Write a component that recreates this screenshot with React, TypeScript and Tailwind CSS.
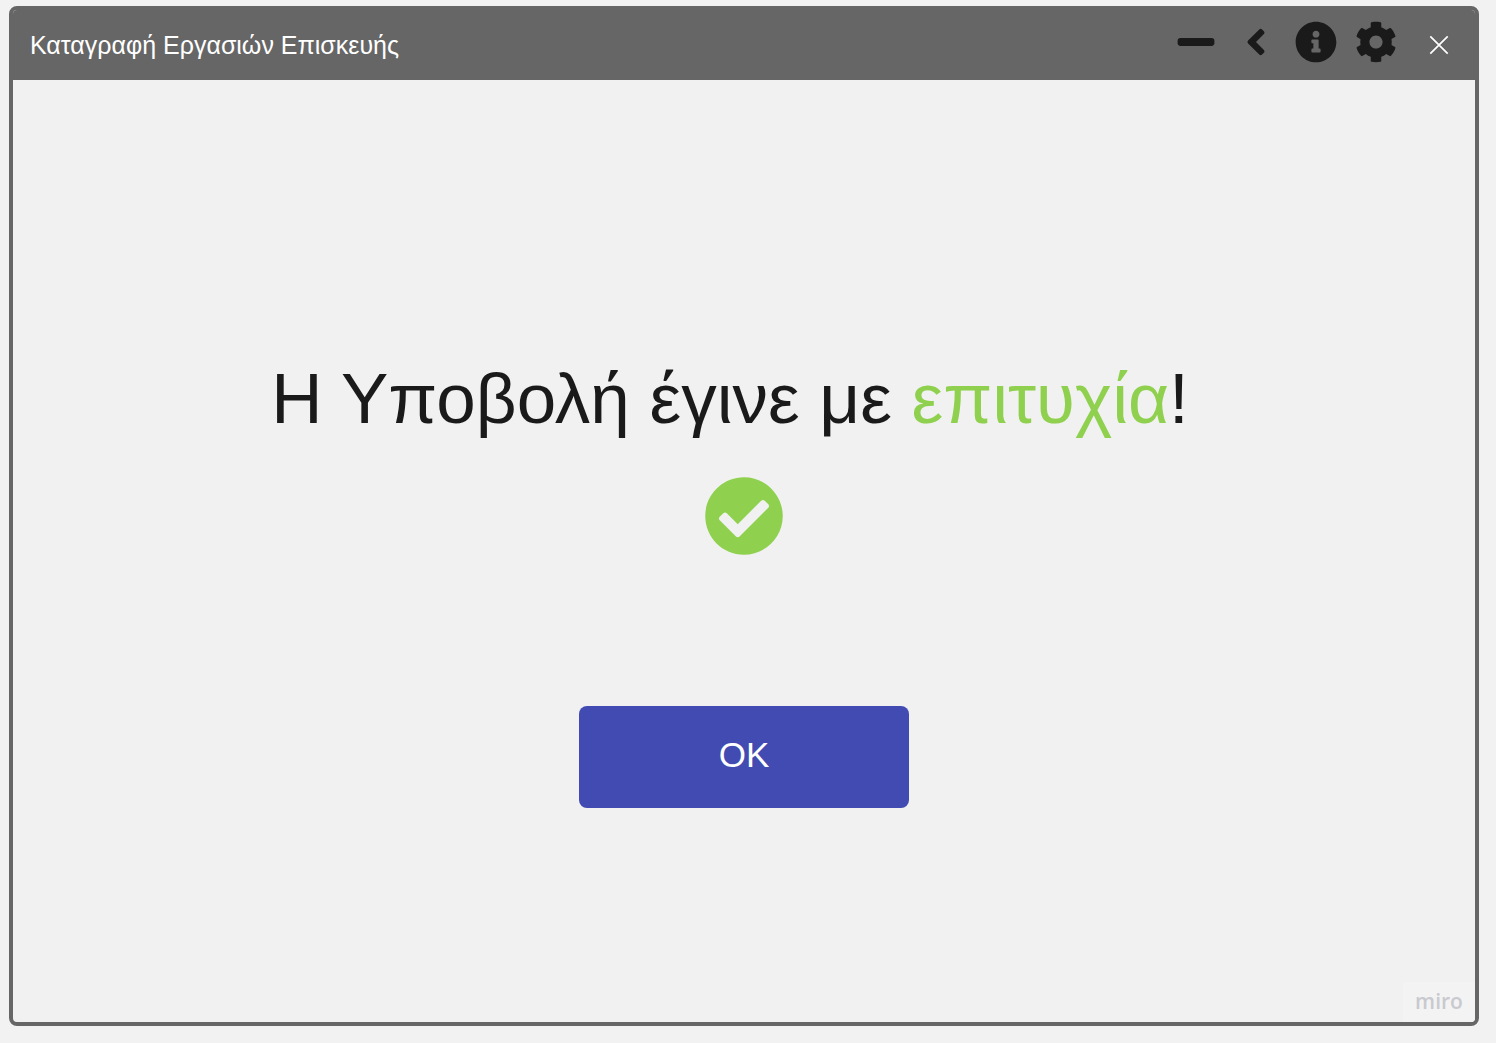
import { FaAngleLeft, FaCheckCircle, FaCog, FaInfoCircle, FaMinus } from "react-icons/fa";

const tools = [
  { label: "Ελαχιστοποίηση", Icon: FaMinus },
  { label: "Πίσω", Icon: FaAngleLeft },
  { label: "Πληροφορίες", Icon: FaInfoCircle },
  { label: "Ρυθμίσεις", Icon: FaCog },
];

function TitleBar() {
  return (
    <header className="-mx-px -mt-px flex h-[71px] items-center justify-between bg-[#666666] pt-px pr-1 pl-[18px]">
      <h1 className="text-[25px] leading-8 text-white">Καταγραφή Εργασιών Επισκευής</h1>
      <div className="flex items-center">
        <div className="flex pb-1.5 text-[#1a1a1a]">
          {tools.map(({ label, Icon }) => (
            <button key={label} type="button" aria-label={label} className="flex w-[60px] items-center justify-center">
              <Icon size={42} />
            </button>
          ))}
        </div>
        <button type="button" aria-label="Κλείσιμο" className="flex w-[66px] items-center justify-center text-white">
          <svg width="20" height="20" viewBox="0 0 20 20" fill="none" stroke="currentColor" strokeWidth="1.7">
            <path d="M1.3 1.3L18.7 18.7M18.7 1.3L1.3 18.7" />
          </svg>
        </button>
      </div>
    </header>
  );
}

export default function App() {
  return (
    <div className="flex min-h-screen flex-col bg-[#f2f2f2] pt-1.5 pr-[17px] pb-[17px] pl-[9px] font-['Liberation_Sans',Arial,sans-serif]">
      <div className="flex grow flex-col overflow-hidden rounded-lg border-4 border-[#666666] bg-[#f1f1f1]">
        <TitleBar />
        <main className="flex grow flex-col items-center justify-center pt-[102px]">
          <p className="pr-7 text-center text-[71px] leading-[86px] text-[#1a1a1a]">
            Η Υποβολή έγινε με <span className="text-[#8fd14f]">επιτυχία</span>!
          </p>
          <FaCheckCircle size={80} className="mt-[34px] text-[#8fd14f]" aria-hidden="true" />
          <button
            type="button"
            className="mt-[150px] h-[102px] w-[330px] rounded-lg bg-[#414bb2] pb-1 text-[35px] text-white"
          >
            OK
          </button>
        </main>
        <footer className="flex justify-end">
          <span className="flex h-10 w-[72px] items-center justify-center bg-[#f3f3f3] font-['Open_Sans',sans-serif] text-[21px] font-semibold text-[#c9c9d0]">
            miro
          </span>
        </footer>
      </div>
    </div>
  );
}
